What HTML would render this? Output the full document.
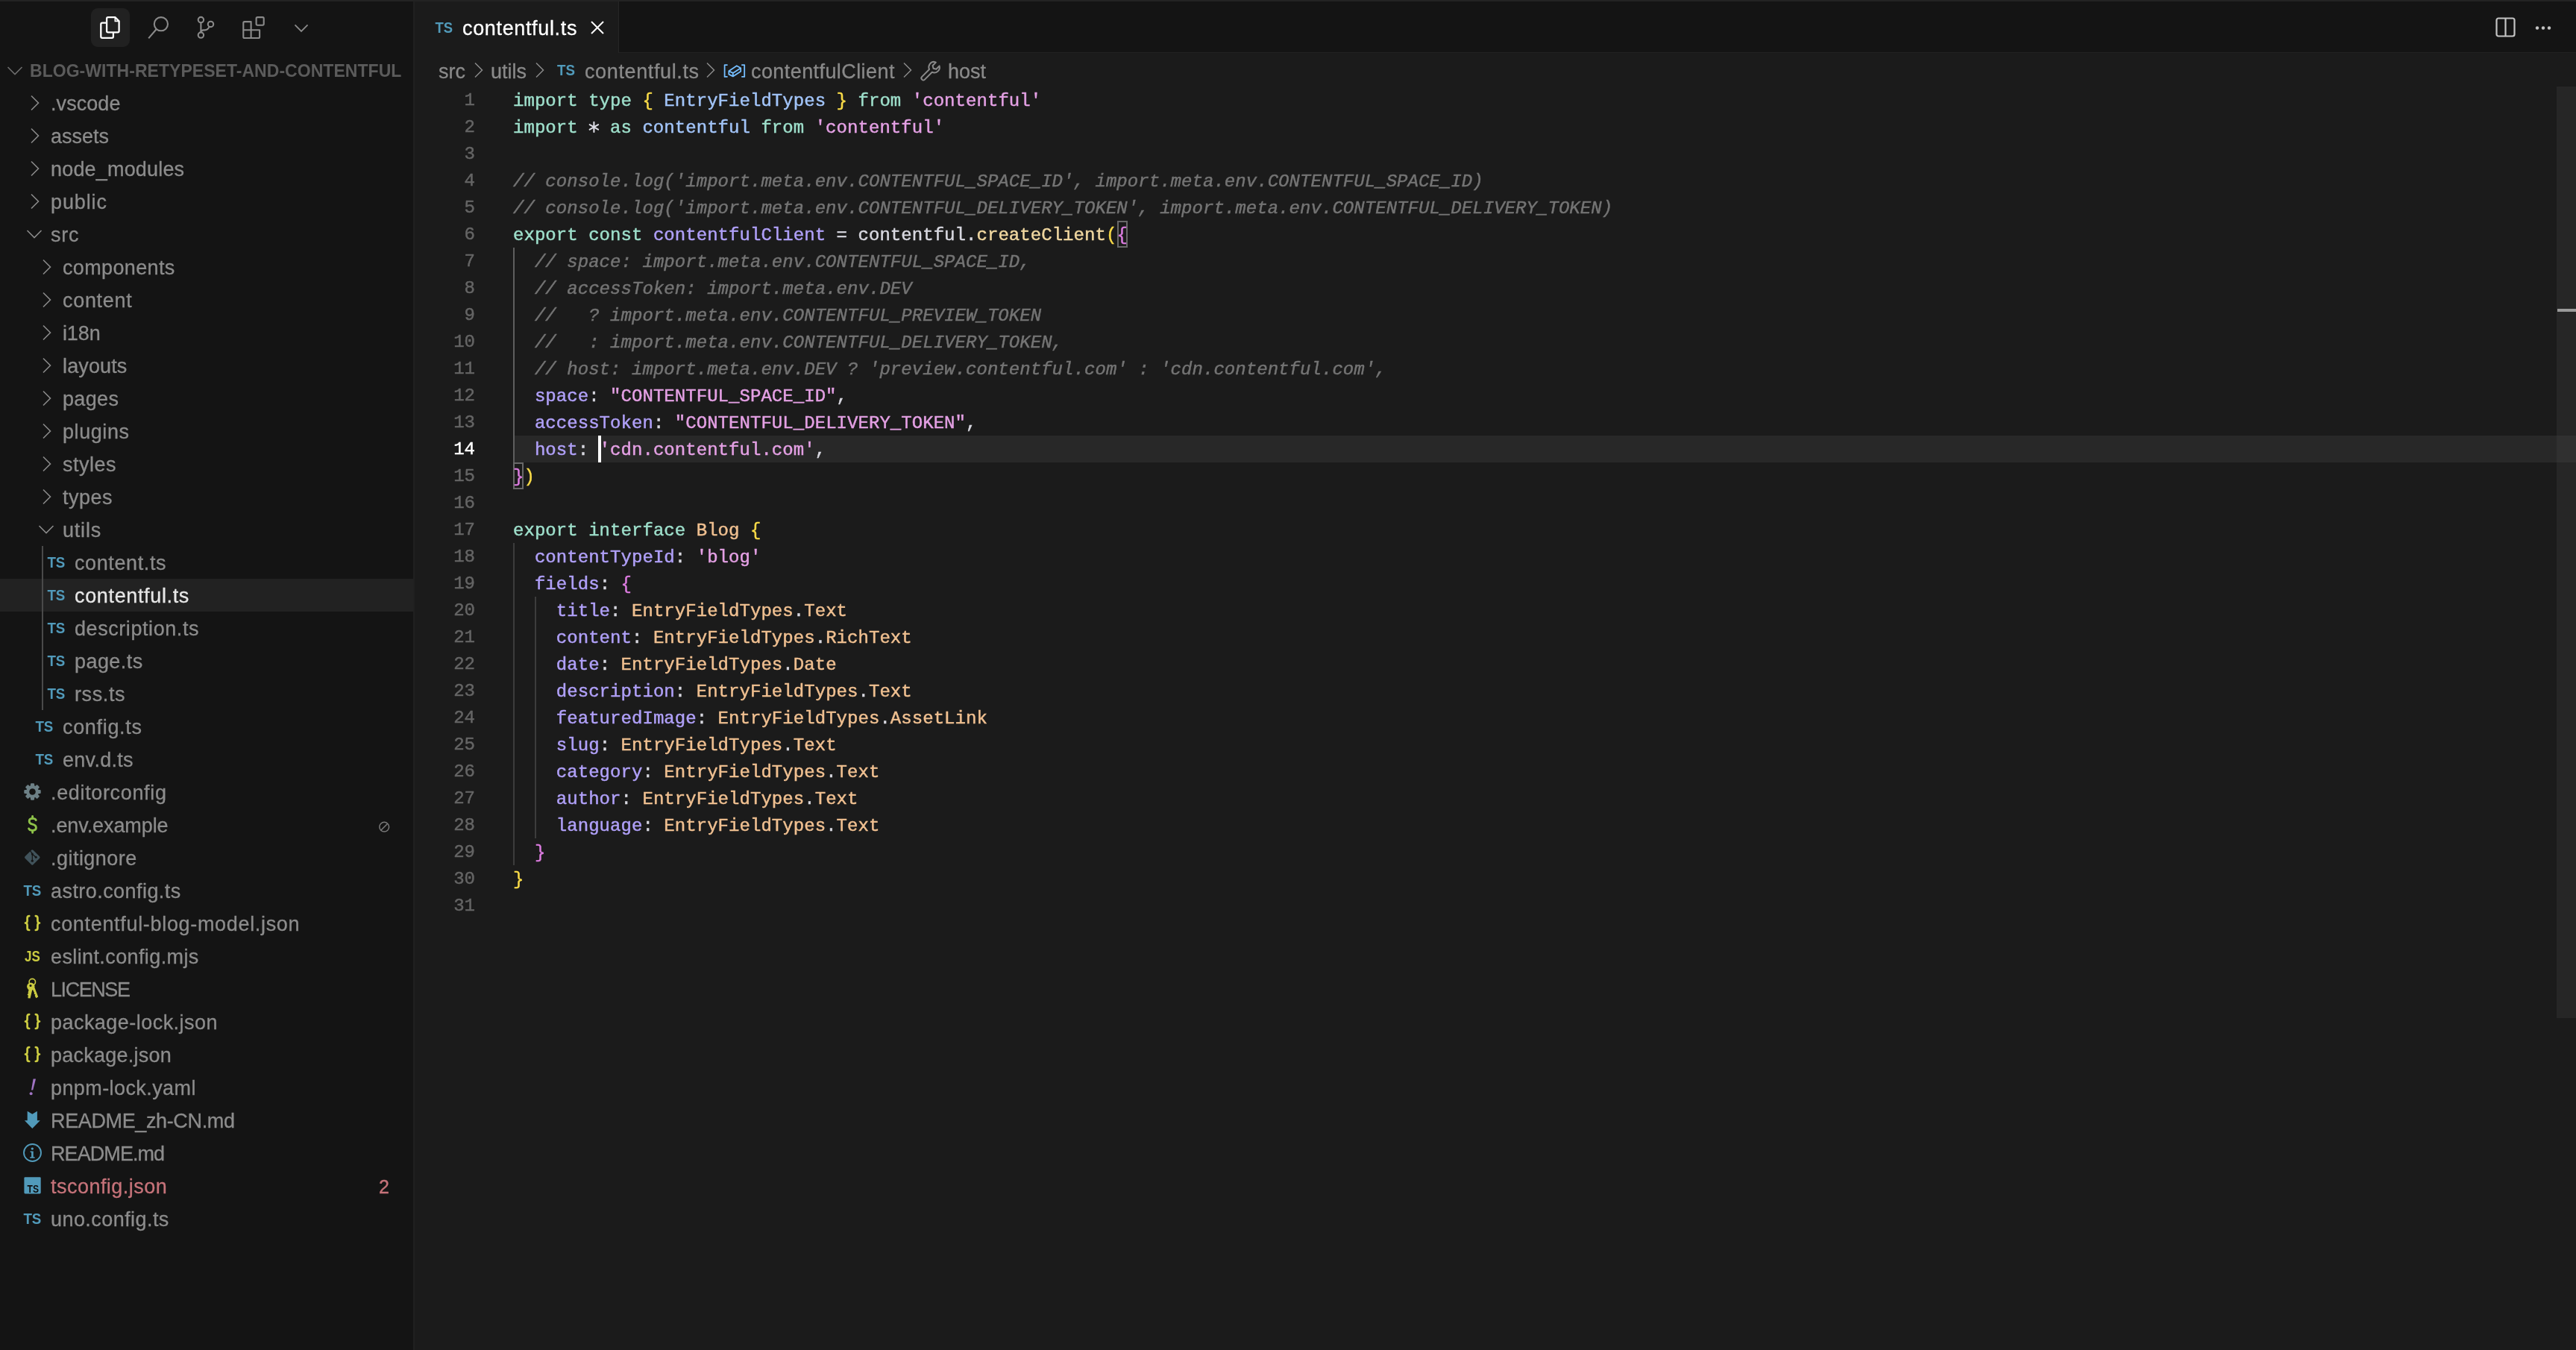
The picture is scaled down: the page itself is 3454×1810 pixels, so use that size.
<!DOCTYPE html>
<html><head><meta charset="utf-8">
<style>
*{margin:0;padding:0;box-sizing:border-box}
html,body{width:3454px;height:1810px;overflow:hidden;background:#1b1b1b}
body{position:relative;-webkit-font-smoothing:antialiased;font-family:"Liberation Sans",sans-serif}
.topline{position:absolute;left:0;top:0;width:3454px;height:2px;background:#232323}
#side{position:absolute;left:0;top:2px;width:554px;height:1808px;background:#141414}
#side .inner{position:absolute;left:0;top:-2px;width:554px;height:1810px}
#sideborder{position:absolute;left:554px;top:2px;width:2px;height:1808px;background:#202020}
.act-bg{position:absolute;left:122px;top:11px;width:52px;height:52px;border-radius:9px;background:#212121}
.aicon{position:absolute}
.hdr{will-change:transform;position:absolute;left:40px;top:73px;letter-spacing:0.04px;height:44px;line-height:44px;font-size:23px;font-weight:bold;color:#5b5b5b;white-space:nowrap}
.hdrchev{position:absolute;left:9px;top:88px}
.row{position:absolute;left:0;width:554px;height:44px}
.row.sel{background:#222222}
.nm{-webkit-text-stroke:0.3px currentColor;position:absolute;top:1px;height:44px;line-height:44px;font-size:27px;color:#8c8c8c;white-space:nowrap;will-change:transform}
.row.sel .nm{color:#e6e6e6}
.row.err .nm{color:#c6737a}
.chr{position:absolute;top:11px}
.chd{position:absolute;top:15px}
.chev{display:block}
.fi{position:absolute;top:0;height:44px;width:30px;will-change:transform}
.fi .ic{position:absolute;top:0;left:0}
.ic-ts,.ic-js{position:absolute;top:0;left:0;line-height:44px;font-size:19px;font-weight:bold;color:#519aba;letter-spacing:-0.5px}
.ic-js{color:#cbcb41}
.ic-json{position:absolute;top:0;left:1px;line-height:44px;font-size:21px;font-weight:bold;color:#cbcb41;letter-spacing:-1px}
.ic-yaml{position:absolute;top:0;left:7px;line-height:44px;font-size:24px;font-weight:bold;font-style:italic;color:#a074c4}
.ic-env{position:absolute;top:0;left:4px;line-height:44px;font-size:24px;font-weight:bold;color:#8dc149}
.ign{position:absolute;left:500px;top:0}
.badge{-webkit-text-stroke:0.4px currentColor;will-change:transform;position:absolute;left:507.5px;top:0.5px;line-height:44px;font-size:25px;color:#c6737a}
.guide-side{position:absolute;left:56px;top:732px;width:2px;height:220px;background:#4a4a4a}
/* tabs */
#tabbar{position:absolute;left:556px;top:2px;width:2898px;height:69px;background:#141414}
#tabbar .bottom{position:absolute;left:0;top:68px;width:2898px;height:1px;background:#222}
.tab{position:absolute;left:556px;top:2px;width:273px;height:69px;background:#1b1b1b}
.tabsep{position:absolute;left:829px;top:2px;width:1px;height:69px;background:#262626}
.tabts{position:absolute;left:583px;top:3px;line-height:69px;font-size:20px;font-weight:bold;color:#519aba;letter-spacing:-0.5px}
.tabname{-webkit-text-stroke:0.3px currentColor;will-change:transform;position:absolute;left:620px;top:4px;line-height:69px;font-size:27px;letter-spacing:0.65px;color:#ffffff}
.tabclose{position:absolute;left:791px;top:28px}
.split{position:absolute;left:3346px;top:23px}
.more{position:absolute;left:3398px;top:33px}
/* breadcrumbs */
.bc{-webkit-text-stroke:0.3px currentColor;will-change:transform;position:absolute;top:73.5px;height:44px;line-height:44px;font-size:27px;color:#8a8a8a;white-space:nowrap}
.bcts{position:absolute;top:72px;line-height:44px;font-size:19px;font-weight:bold;color:#519aba;letter-spacing:-0.5px}
.bcchev{position:absolute;top:83px}
/* editor */
.curline{position:absolute;left:690px;top:584px;width:2738px;height:36px;background:#282828}
.ln{-webkit-text-stroke:0.45px currentColor;will-change:transform;position:absolute;left:560px;width:77px;text-align:right;height:36px;line-height:36px;font-family:"Liberation Mono",monospace;font-size:24px;color:#656565;padding-top:1px}
.ln.act{color:#ffffff}
.cl{position:absolute;left:688px;-webkit-text-stroke:0.45px currentColor;will-change:transform;height:36px;line-height:36px;font-family:"Liberation Mono",monospace;font-size:24px;color:#e0e0e0;white-space:pre;letter-spacing:0.05px;padding-top:2px}
.kw{color:#9edfcb}
.ty{color:#a2c4f8}
.b1{color:#f8da48}
.b2{color:#dc7ce0}
.str{color:#e4a0e4}
.cm{color:#747474;font-style:italic}
.wh{color:#d8d8e0}
.ast{display:inline-block;vertical-align:top}
.pr{color:#b0a0f8}
.vr{color:#b0a0f8}
.fn{color:#f0d7a0}
.tn{color:#f0c091}
.guide{position:absolute;width:2px;background:#3c3c3c}
.guide.active{background:#5e5e5e}
.brbox{position:absolute;border:2px solid #686868;width:14px;height:36px}
.cursor{position:absolute;left:802px;top:584px;width:4px;height:36px;background:#ffffff}
.scroll{position:absolute;left:3428px;top:116px;width:26px;height:1249px;background:#262626}
.scrollmark{position:absolute;left:3429px;top:414px;width:25px;height:4px;background:#9a9a9a}
.scrollcur{position:absolute;left:3428px;top:584px;width:26px;height:36px;background:#303030}
</style></head>
<body>
<div class="topline"></div>
<div id="side"><div class="inner">
  <div class="act-bg"></div>
  <svg class="aicon" style="left:0;top:0" width="554" height="70" viewBox="0 0 554 70">
    <g fill="none" stroke="#ffffff" stroke-width="2.3" stroke-linejoin="round">
      <path d="M144.9 23.1H154.3L159.6 28.4V41.6Q159.6 43.4 157.8 43.4H144.9Q143.1 43.4 143.1 41.6V24.9Q143.1 23.1 144.9 23.1Z"/>
      <path d="M143.1 30.6H137.1Q135.3 30.6 135.3 32.4V49.1Q135.3 50.9 137.1 50.9H150.1Q151.9 50.9 151.9 49.1V43.4"/>
    </g>
    <path d="M154.3 23.8V28.4H159" fill="none" stroke="#ffffff" stroke-width="1.6"/>
    <g fill="none" stroke="#8a8a8a" stroke-width="2.1">
      <circle cx="215.9" cy="32.2" r="9.1"/>
      <path d="M209.6 39.3L199.2 51.4"/>
      <circle cx="269.4" cy="26.6" r="3.7"/>
      <circle cx="269.4" cy="47.1" r="3.7"/>
      <circle cx="282.5" cy="32.4" r="3.7"/>
      <path d="M269.4 30.3V43.4"/>
      <path d="M280.7 35.7Q278.8 40.4 274.6 40.4H273Q269.4 40.4 269.4 43.4"/>
    </g>
    <g fill="none" stroke="#8a8a8a" stroke-width="2.1" stroke-linejoin="round">
      <path d="M327.9 29.1H336.6V40.2H348.1V49.4Q348.1 51 346.5 51H327.9Q326.3 51 326.3 49.4V30.7Q326.3 29.1 327.9 29.1Z"/>
      <path d="M326.3 40.2H336.6V51"/>
      <rect x="343.6" y="23.1" width="10.1" height="10.6" rx="1.6"/>
    </g>
    <path d="M395.5 33.4L404 41.9L412.5 33.4" fill="none" stroke="#8a8a8a" stroke-width="1.8"/>
  </svg>

  <svg class="hdrchev" width="22" height="14" viewBox="0 0 22 14"><path d="M1.5 2l9.5 9.5L20.5 2" fill="none" stroke="#6e6e6e" stroke-width="1.6"/></svg>
  <div class="hdr">BLOG-WITH-RETYPESET-AND-CONTENTFUL</div>
<div class="row" style="top:116px"><div class="chr" style="left:40px"><svg class="chev" width="14" height="22" viewBox="0 0 14 22"><path d="M2 1.5l9.5 9.5L2 20.5" fill="none" stroke="#8a8a8a" stroke-width="1.6"/></svg></div><div class="nm" style="left:67.5px;letter-spacing:0.063px">.vscode</div></div>
<div class="row" style="top:160px"><div class="chr" style="left:40px"><svg class="chev" width="14" height="22" viewBox="0 0 14 22"><path d="M2 1.5l9.5 9.5L2 20.5" fill="none" stroke="#8a8a8a" stroke-width="1.6"/></svg></div><div class="nm" style="left:67.5px;letter-spacing:0.0px">assets</div></div>
<div class="row" style="top:204px"><div class="chr" style="left:40px"><svg class="chev" width="14" height="22" viewBox="0 0 14 22"><path d="M2 1.5l9.5 9.5L2 20.5" fill="none" stroke="#8a8a8a" stroke-width="1.6"/></svg></div><div class="nm" style="left:67.5px;letter-spacing:0.177px">node_modules</div></div>
<div class="row" style="top:248px"><div class="chr" style="left:40px"><svg class="chev" width="14" height="22" viewBox="0 0 14 22"><path d="M2 1.5l9.5 9.5L2 20.5" fill="none" stroke="#8a8a8a" stroke-width="1.6"/></svg></div><div class="nm" style="left:67.5px;letter-spacing:0.88px">public</div></div>
<div class="row" style="top:292px"><div class="chd" style="left:35px"><svg class="chev" width="22" height="14" viewBox="0 0 22 14"><path d="M1.5 2l9.5 9.5L20.5 2" fill="none" stroke="#8a8a8a" stroke-width="1.6"/></svg></div><div class="nm" style="left:67.5px;letter-spacing:0.8px">src</div></div>
<div class="row" style="top:336px"><div class="chr" style="left:56px"><svg class="chev" width="14" height="22" viewBox="0 0 14 22"><path d="M2 1.5l9.5 9.5L2 20.5" fill="none" stroke="#8a8a8a" stroke-width="1.6"/></svg></div><div class="nm" style="left:83.5px;letter-spacing:0.358px">components</div></div>
<div class="row" style="top:380px"><div class="chr" style="left:56px"><svg class="chev" width="14" height="22" viewBox="0 0 14 22"><path d="M2 1.5l9.5 9.5L2 20.5" fill="none" stroke="#8a8a8a" stroke-width="1.6"/></svg></div><div class="nm" style="left:83.5px;letter-spacing:0.697px">content</div></div>
<div class="row" style="top:424px"><div class="chr" style="left:56px"><svg class="chev" width="14" height="22" viewBox="0 0 14 22"><path d="M2 1.5l9.5 9.5L2 20.5" fill="none" stroke="#8a8a8a" stroke-width="1.6"/></svg></div><div class="nm" style="left:83.5px;letter-spacing:-0.13px">i18n</div></div>
<div class="row" style="top:468px"><div class="chr" style="left:56px"><svg class="chev" width="14" height="22" viewBox="0 0 14 22"><path d="M2 1.5l9.5 9.5L2 20.5" fill="none" stroke="#8a8a8a" stroke-width="1.6"/></svg></div><div class="nm" style="left:83.5px;letter-spacing:0.133px">layouts</div></div>
<div class="row" style="top:512px"><div class="chr" style="left:56px"><svg class="chev" width="14" height="22" viewBox="0 0 14 22"><path d="M2 1.5l9.5 9.5L2 20.5" fill="none" stroke="#8a8a8a" stroke-width="1.6"/></svg></div><div class="nm" style="left:83.5px;letter-spacing:0.355px">pages</div></div>
<div class="row" style="top:556px"><div class="chr" style="left:56px"><svg class="chev" width="14" height="22" viewBox="0 0 14 22"><path d="M2 1.5l9.5 9.5L2 20.5" fill="none" stroke="#8a8a8a" stroke-width="1.6"/></svg></div><div class="nm" style="left:83.5px;letter-spacing:0.567px">plugins</div></div>
<div class="row" style="top:600px"><div class="chr" style="left:56px"><svg class="chev" width="14" height="22" viewBox="0 0 14 22"><path d="M2 1.5l9.5 9.5L2 20.5" fill="none" stroke="#8a8a8a" stroke-width="1.6"/></svg></div><div class="nm" style="left:83.5px;letter-spacing:0.48px">styles</div></div>
<div class="row" style="top:644px"><div class="chr" style="left:56px"><svg class="chev" width="14" height="22" viewBox="0 0 14 22"><path d="M2 1.5l9.5 9.5L2 20.5" fill="none" stroke="#8a8a8a" stroke-width="1.6"/></svg></div><div class="nm" style="left:83.5px;letter-spacing:0.495px">types</div></div>
<div class="row" style="top:688px"><div class="chd" style="left:51px"><svg class="chev" width="22" height="14" viewBox="0 0 22 14"><path d="M1.5 2l9.5 9.5L20.5 2" fill="none" stroke="#8a8a8a" stroke-width="1.6"/></svg></div><div class="nm" style="left:83.5px;letter-spacing:0.8px">utils</div></div>
<div class="row" style="top:732px"><div class="fi" style="left:61px"><svg class="ic" width="30" height="44" viewBox="0 0 30 44"><text x="2.4" y="29.1" font-family="Liberation Sans" font-weight="bold" font-size="21" textLength="24" lengthAdjust="spacingAndGlyphs" fill="#519aba">TS</text></svg></div><div class="nm" style="left:99.5px;letter-spacing:0.604px">content.ts</div></div>
<div class="row sel" style="top:776px"><div class="fi" style="left:61px"><svg class="ic" width="30" height="44" viewBox="0 0 30 44"><text x="2.4" y="29.1" font-family="Liberation Sans" font-weight="bold" font-size="21" textLength="24" lengthAdjust="spacingAndGlyphs" fill="#519aba">TS</text></svg></div><div class="nm" style="left:99.5px;letter-spacing:0.648px">contentful.ts</div></div>
<div class="row" style="top:820px"><div class="fi" style="left:61px"><svg class="ic" width="30" height="44" viewBox="0 0 30 44"><text x="2.4" y="29.1" font-family="Liberation Sans" font-weight="bold" font-size="21" textLength="24" lengthAdjust="spacingAndGlyphs" fill="#519aba">TS</text></svg></div><div class="nm" style="left:99.5px;letter-spacing:0.569px">description.ts</div></div>
<div class="row" style="top:864px"><div class="fi" style="left:61px"><svg class="ic" width="30" height="44" viewBox="0 0 30 44"><text x="2.4" y="29.1" font-family="Liberation Sans" font-weight="bold" font-size="21" textLength="24" lengthAdjust="spacingAndGlyphs" fill="#519aba">TS</text></svg></div><div class="nm" style="left:99.5px;letter-spacing:0.43px">page.ts</div></div>
<div class="row" style="top:908px"><div class="fi" style="left:61px"><svg class="ic" width="30" height="44" viewBox="0 0 30 44"><text x="2.4" y="29.1" font-family="Liberation Sans" font-weight="bold" font-size="21" textLength="24" lengthAdjust="spacingAndGlyphs" fill="#519aba">TS</text></svg></div><div class="nm" style="left:99.5px;letter-spacing:0.6px">rss.ts</div></div>
<div class="row" style="top:952px"><div class="fi" style="left:45px"><svg class="ic" width="30" height="44" viewBox="0 0 30 44"><text x="2.4" y="29.1" font-family="Liberation Sans" font-weight="bold" font-size="21" textLength="24" lengthAdjust="spacingAndGlyphs" fill="#519aba">TS</text></svg></div><div class="nm" style="left:83.5px;letter-spacing:0.678px">config.ts</div></div>
<div class="row" style="top:996px"><div class="fi" style="left:45px"><svg class="ic" width="30" height="44" viewBox="0 0 30 44"><text x="2.4" y="29.1" font-family="Liberation Sans" font-weight="bold" font-size="21" textLength="24" lengthAdjust="spacingAndGlyphs" fill="#519aba">TS</text></svg></div><div class="nm" style="left:83.5px;letter-spacing:0.287px">env.d.ts</div></div>
<div class="row" style="top:1040px"><div class="fi" style="left:29px"><svg class="ic" width="30" height="44" viewBox="0 0 30 44"><g transform="translate(14.5 21.5)" fill="#6d8086"><circle r="8.4"/><rect x="-2.6" y="-11.2" width="5.2" height="5" rx="1.1" transform="rotate(0)"/><rect x="-2.6" y="-11.2" width="5.2" height="5" rx="1.1" transform="rotate(45)"/><rect x="-2.6" y="-11.2" width="5.2" height="5" rx="1.1" transform="rotate(90)"/><rect x="-2.6" y="-11.2" width="5.2" height="5" rx="1.1" transform="rotate(135)"/><rect x="-2.6" y="-11.2" width="5.2" height="5" rx="1.1" transform="rotate(180)"/><rect x="-2.6" y="-11.2" width="5.2" height="5" rx="1.1" transform="rotate(225)"/><rect x="-2.6" y="-11.2" width="5.2" height="5" rx="1.1" transform="rotate(270)"/><rect x="-2.6" y="-11.2" width="5.2" height="5" rx="1.1" transform="rotate(315)"/></g><circle cx="14.5" cy="21.5" r="4.3" fill="#141414"/></svg></div><div class="nm" style="left:67.5px;letter-spacing:0.653px">.editorconfig</div></div>
<div class="row" style="top:1084px"><div class="fi" style="left:29px"><svg class="ic" width="30" height="44" viewBox="0 0 30 44"><g fill="none" stroke="#8dc149" stroke-width="2.9" stroke-linecap="round"><path d="M19.2 15.6Q18.4 13.4 14.6 13.4Q10.2 13.4 10.2 17Q10.2 20 14.6 21.2Q19.4 22.5 19.4 25.8Q19.4 29.4 14.6 29.4Q10.4 29.4 9.6 26.9"/><path d="M14.6 10.4V13.2M14.6 29.6V32.4"/></g></svg></div><div class="nm" style="left:67.5px;letter-spacing:-0.092px">.env.example</div><svg class="ign" width="30" height="44" viewBox="500 0 30 44"><circle cx="515.2" cy="24.7" r="6.4" fill="none" stroke="#7a7a7a" stroke-width="1.5"/><path d="M510.7 29.2L519.7 20.2" stroke="#7a7a7a" stroke-width="1.5"/></svg></div>
<div class="row" style="top:1128px"><div class="fi" style="left:29px"><svg class="ic" width="30" height="44" viewBox="0 0 30 44"><rect x="6.6" y="13.8" width="15.4" height="15.4" rx="1.6" transform="rotate(45 14.3 21.5)" fill="#41535b"/><g stroke="#141414" stroke-width="1.2" fill="none"><path d="M10.8 11.6L14.3 16.6V26M14.3 17.2L19.2 21.2"/></g><g fill="#141414"><circle cx="14.3" cy="16.9" r="1.5"/><circle cx="19.2" cy="21.3" r="1.5"/><circle cx="14.3" cy="26.2" r="1.6"/></g></svg></div><div class="nm" style="left:67.5px;letter-spacing:0.469px">.gitignore</div></div>
<div class="row" style="top:1172px"><div class="fi" style="left:29px"><svg class="ic" width="30" height="44" viewBox="0 0 30 44"><text x="2.4" y="29.1" font-family="Liberation Sans" font-weight="bold" font-size="21" textLength="24" lengthAdjust="spacingAndGlyphs" fill="#519aba">TS</text></svg></div><div class="nm" style="left:67.5px;letter-spacing:0.44px">astro.config.ts</div></div>
<div class="row" style="top:1216px"><div class="fi" style="left:29px"><svg class="ic" width="30" height="44" viewBox="0 0 30 44"><g fill="none" stroke="#cbcb41" stroke-width="2.7" stroke-linecap="round" stroke-linejoin="round"><path d="M10.2 12.1Q7.6 12.1 7.6 14.6V18.6Q7.6 21.5 5 21.5Q7.6 21.5 7.6 24.4V28.5Q7.6 31 10.2 31"/><path d="M18.8 12.1Q21.4 12.1 21.4 14.6V18.6Q21.4 21.5 24 21.5Q21.4 21.5 21.4 24.4V28.5Q21.4 31 18.8 31"/></g></svg></div><div class="nm" style="left:67.5px;letter-spacing:0.676px">contentful-blog-model.json</div></div>
<div class="row" style="top:1260px"><div class="fi" style="left:29px"><svg class="ic" width="30" height="44" viewBox="0 0 30 44"><text x="4.1" y="29.1" font-family="Liberation Sans" font-weight="bold" font-size="21" textLength="20.8" lengthAdjust="spacingAndGlyphs" fill="#cbcb41">JS</text></svg></div><div class="nm" style="left:67.5px;letter-spacing:0.39px">eslint.config.mjs</div></div>
<div class="row" style="top:1304px"><div class="fi" style="left:29px"><svg class="ic" width="30" height="44" viewBox="0 0 30 44"><circle cx="14.3" cy="12.6" r="4.2" fill="none" stroke="#cbcb41" stroke-width="1.6"/><g fill="#cbcb41"><circle cx="12.3" cy="18.6" r="5.2"/><path d="M10.2 21L14.6 21.6L11.6 34.6L8.4 34.2L8.8 30.6L7.6 29.8L9 27.6L8.6 26.4Z"/><path d="M13.8 20.4L17.2 19.4L22.2 32.6L19.4 34.2L17.6 31L18.4 29.6L16.6 28.8L17 27.2Z"/></g><circle cx="12" cy="17.6" r="1.5" fill="#141414"/></svg></div><div class="nm" style="left:67.5px;letter-spacing:-1.437px">LICENSE</div></div>
<div class="row" style="top:1348px"><div class="fi" style="left:29px"><svg class="ic" width="30" height="44" viewBox="0 0 30 44"><g fill="none" stroke="#cbcb41" stroke-width="2.7" stroke-linecap="round" stroke-linejoin="round"><path d="M10.2 12.1Q7.6 12.1 7.6 14.6V18.6Q7.6 21.5 5 21.5Q7.6 21.5 7.6 24.4V28.5Q7.6 31 10.2 31"/><path d="M18.8 12.1Q21.4 12.1 21.4 14.6V18.6Q21.4 21.5 24 21.5Q21.4 21.5 21.4 24.4V28.5Q21.4 31 18.8 31"/></g></svg></div><div class="nm" style="left:67.5px;letter-spacing:0.46px">package-lock.json</div></div>
<div class="row" style="top:1392px"><div class="fi" style="left:29px"><svg class="ic" width="30" height="44" viewBox="0 0 30 44"><g fill="none" stroke="#cbcb41" stroke-width="2.7" stroke-linecap="round" stroke-linejoin="round"><path d="M10.2 12.1Q7.6 12.1 7.6 14.6V18.6Q7.6 21.5 5 21.5Q7.6 21.5 7.6 24.4V28.5Q7.6 31 10.2 31"/><path d="M18.8 12.1Q21.4 12.1 21.4 14.6V18.6Q21.4 21.5 24 21.5Q21.4 21.5 21.4 24.4V28.5Q21.4 31 18.8 31"/></g></svg></div><div class="nm" style="left:67.5px;letter-spacing:0.24px">package.json</div></div>
<div class="row" style="top:1436px"><div class="fi" style="left:29px"><svg class="ic" width="30" height="44" viewBox="0 0 30 44"><path d="M15.6 10.6L19 10.6L15.2 25.4L13 25.4Z" fill="#a074c4"/><circle cx="12.6" cy="30.3" r="2" fill="#a074c4"/></svg></div><div class="nm" style="left:67.5px;letter-spacing:0.416px">pnpm-lock.yaml</div></div>
<div class="row" style="top:1480px"><div class="fi" style="left:29px"><svg class="ic" width="30" height="44" viewBox="0 0 30 44"><path d="M7.7 9.8L14.3 13.8L20.9 9.8V22.2H24.8L14.3 32.9L3.9 22.2H7.7Z" fill="#519aba"/></svg></div><div class="nm" style="left:67.5px;letter-spacing:-0.367px">README_zh-CN.md</div></div>
<div class="row" style="top:1524px"><div class="fi" style="left:29px"><svg class="ic" width="30" height="44" viewBox="0 0 30 44"><circle cx="14.5" cy="21.5" r="11.5" fill="none" stroke="#519aba" stroke-width="1.9"/><g fill="#519aba"><circle cx="14.3" cy="16.1" r="1.7"/><path d="M11.6 19.5H15.7V27.2H17.6V28.7H11.2V27.2H13.1V21H11.6Z"/></g></svg></div><div class="nm" style="left:67.5px;letter-spacing:-0.925px">README.md</div></div>
<div class="row err" style="top:1568px"><div class="fi" style="left:29px"><svg class="ic" width="30" height="44" viewBox="0 0 30 44"><rect x="3.4" y="10.2" width="22.3" height="22.3" rx="1.4" fill="#519aba"/><text x="7.6" y="30.7" font-family="Liberation Sans" font-weight="bold" font-size="14.5" textLength="15.4" lengthAdjust="spacingAndGlyphs" fill="#0d0d0d">TS</text></svg></div><div class="nm" style="left:67.5px;letter-spacing:0.47px">tsconfig.json</div><div class="badge">2</div></div>
<div class="row" style="top:1612px"><div class="fi" style="left:29px"><svg class="ic" width="30" height="44" viewBox="0 0 30 44"><text x="2.4" y="29.1" font-family="Liberation Sans" font-weight="bold" font-size="21" textLength="24" lengthAdjust="spacingAndGlyphs" fill="#519aba">TS</text></svg></div><div class="nm" style="left:67.5px;letter-spacing:0.437px">uno.config.ts</div></div>
  <div class="guide-side"></div>
</div></div>
<div id="sideborder"></div>

<div id="tabbar"><div class="bottom"></div></div>
<div class="tab"></div>
<div class="tabsep"></div>
<svg style="position:absolute;left:580px;top:20px;will-change:transform" width="32" height="32" viewBox="0 0 32 32"><text x="3.4" y="24" font-family="Liberation Sans" font-weight="bold" font-size="20.5" textLength="23.6" lengthAdjust="spacingAndGlyphs" fill="#519aba">TS</text></svg>
<div class="tabname">contentful.ts</div>
<svg class="tabclose" style="top:27.3px" width="20" height="20" viewBox="0 0 20 20"><path d="M2 2l16 16M18 2L2 18" stroke="#ffffff" stroke-width="2"/></svg>
<svg class="split" width="28" height="28" viewBox="0 0 28 28"><g fill="none" stroke="#c4c4c4" stroke-width="2.2"><rect x="1.5" y="1.5" width="24" height="24" rx="2.5"/><path d="M13.5 1.5v24"/></g></svg>
<svg class="more" width="26" height="10" viewBox="0 0 26 10"><g fill="#c4c4c4"><circle cx="4" cy="4.5" r="2.2"/><circle cx="12" cy="4.5" r="2.2"/><circle cx="20" cy="4.5" r="2.2"/></g></svg>

<div class="bc" style="left:588px">src</div>
<svg class="bcchev" style="left:635px" width="14" height="22" viewBox="0 0 14 22"><path d="M2 1.5l9.5 9.5L2 20.5" fill="none" stroke="#8a8a8a" stroke-width="1.5"/></svg>
<div class="bc" style="left:658px">utils</div>
<svg class="bcchev" style="left:717px" width="14" height="22" viewBox="0 0 14 22"><path d="M2 1.5l9.5 9.5L2 20.5" fill="none" stroke="#8a8a8a" stroke-width="1.5"/></svg>
<svg style="position:absolute;left:744px;top:78px;will-change:transform" width="32" height="32" viewBox="0 0 32 32"><text x="3" y="23.2" font-family="Liberation Sans" font-weight="bold" font-size="21" textLength="24" lengthAdjust="spacingAndGlyphs" fill="#519aba">TS</text></svg>
<div class="bc" style="left:783.5px;letter-spacing:0.62px">contentful.ts</div>
<svg class="bcchev" style="left:946px" width="14" height="22" viewBox="0 0 14 22"><path d="M2 1.5l9.5 9.5L2 20.5" fill="none" stroke="#8a8a8a" stroke-width="1.5"/></svg>
<svg class="bcchev" style="left:969px;top:82px" width="32" height="26" viewBox="969 82 32 26"><g fill="none" stroke="#75beff" stroke-width="1.8" stroke-linejoin="round"><path d="M975.6 87.2H971.6V102.9H975.6M994.2 87.2H998.2V102.9H994.2"/><path d="M977.3 95.2L987.8 88.2L993.2 91.2V95.8L982.8 102.4L977.3 99.6Z M977.3 95.2L982.8 97.9L993.2 91.2 M982.8 97.9V102.4"/></g></svg>
<div class="bc" style="left:1007px;letter-spacing:0.42px">contentfulClient</div>
<svg class="bcchev" style="left:1210px" width="14" height="22" viewBox="0 0 14 22"><path d="M2 1.5l9.5 9.5L2 20.5" fill="none" stroke="#8a8a8a" stroke-width="1.5"/></svg>
<svg class="bcchev" style="left:1232px;top:79px" width="32" height="32" viewBox="0 0 29 29"><path d="M18.5 3.5a6.5 6.5 0 0 0-5.8 9.2L3.8 21.6a2.4 2.4 0 0 0 3.4 3.4l8.9-8.9a6.5 6.5 0 0 0 8.9-7.6l-3.9 3.9-3.4-.9-.9-3.4 3.9-3.9a6.5 6.5 0 0 0-2.2-.7z" fill="none" stroke="#8a8a8a" stroke-width="1.8" stroke-linejoin="round"/></svg>
<div class="bc" style="left:1271px">host</div>

<div class="curline"></div>
<div class="guide active" style="left:688px;top:332px;height:288px"></div>
<div class="guide" style="left:688px;top:728px;height:432px"></div>
<div class="guide" style="left:717px;top:800px;height:324px"></div>
<div class="brbox" style="left:1498px;top:296px"></div>
<div class="brbox" style="left:688px;top:620px"></div>
<div class="ln" style="top:116px">1</div>
<div class="ln" style="top:152px">2</div>
<div class="ln" style="top:188px">3</div>
<div class="ln" style="top:224px">4</div>
<div class="ln" style="top:260px">5</div>
<div class="ln" style="top:296px">6</div>
<div class="ln" style="top:332px">7</div>
<div class="ln" style="top:368px">8</div>
<div class="ln" style="top:404px">9</div>
<div class="ln" style="top:440px">10</div>
<div class="ln" style="top:476px">11</div>
<div class="ln" style="top:512px">12</div>
<div class="ln" style="top:548px">13</div>
<div class="ln act" style="top:584px">14</div>
<div class="ln" style="top:620px">15</div>
<div class="ln" style="top:656px">16</div>
<div class="ln" style="top:692px">17</div>
<div class="ln" style="top:728px">18</div>
<div class="ln" style="top:764px">19</div>
<div class="ln" style="top:800px">20</div>
<div class="ln" style="top:836px">21</div>
<div class="ln" style="top:872px">22</div>
<div class="ln" style="top:908px">23</div>
<div class="ln" style="top:944px">24</div>
<div class="ln" style="top:980px">25</div>
<div class="ln" style="top:1016px">26</div>
<div class="ln" style="top:1052px">27</div>
<div class="ln" style="top:1088px">28</div>
<div class="ln" style="top:1124px">29</div>
<div class="ln" style="top:1160px">30</div>
<div class="ln" style="top:1196px">31</div>
<div class="cl" style="top:116px"><span class="kw">import</span> <span class="kw">type</span> <span class="b1">{</span> <span class="ty">EntryFieldTypes</span> <span class="b1">}</span> <span class="kw">from</span> <span class="str">&#x27;contentful&#x27;</span></div>
<div class="cl" style="top:152px"><span class="kw">import</span> <svg class="ast" width="14.45" height="36" viewBox="0 0 14.45 36"><g stroke="#dcdce4" stroke-width="2.1" stroke-linecap="round"><path d="M7.4 9.8V23M1.7 13.1L13.1 19.7M1.7 19.7L13.1 13.1"/></g></svg> <span class="kw">as</span> <span class="ty">contentful</span> <span class="kw">from</span> <span class="str">&#x27;contentful&#x27;</span></div>
<div class="cl" style="top:188px"></div>
<div class="cl" style="top:224px"><span class="cm">// console.log(&#x27;import.meta.env.CONTENTFUL_SPACE_ID&#x27;, import.meta.env.CONTENTFUL_SPACE_ID)</span></div>
<div class="cl" style="top:260px"><span class="cm">// console.log(&#x27;import.meta.env.CONTENTFUL_DELIVERY_TOKEN&#x27;, import.meta.env.CONTENTFUL_DELIVERY_TOKEN)</span></div>
<div class="cl" style="top:296px"><span class="kw">export</span> <span class="kw">const</span> <span class="vr">contentfulClient</span> <span class="wh">=</span> <span class="wh">contentful.</span><span class="fn">createClient</span><span class="b1">(</span><span class="b2">{</span></div>
<div class="cl" style="top:332px">  <span class="cm">// space: import.meta.env.CONTENTFUL_SPACE_ID,</span></div>
<div class="cl" style="top:368px">  <span class="cm">// accessToken: import.meta.env.DEV</span></div>
<div class="cl" style="top:404px">  <span class="cm">//   ? import.meta.env.CONTENTFUL_PREVIEW_TOKEN</span></div>
<div class="cl" style="top:440px">  <span class="cm">//   : import.meta.env.CONTENTFUL_DELIVERY_TOKEN,</span></div>
<div class="cl" style="top:476px">  <span class="cm">// host: import.meta.env.DEV ? &#x27;preview.contentful.com&#x27; : &#x27;cdn.contentful.com&#x27;,</span></div>
<div class="cl" style="top:512px">  <span class="pr">space</span><span class="wh">: </span><span class="str">&quot;CONTENTFUL_SPACE_ID&quot;</span><span class="wh">,</span></div>
<div class="cl" style="top:548px">  <span class="pr">accessToken</span><span class="wh">: </span><span class="str">&quot;CONTENTFUL_DELIVERY_TOKEN&quot;</span><span class="wh">,</span></div>
<div class="cl" style="top:584px">  <span class="pr">host</span><span class="wh">: </span><span class="str">&#x27;cdn.contentful.com&#x27;</span><span class="wh">,</span></div>
<div class="cl" style="top:620px"><span class="b2">}</span><span class="b1">)</span></div>
<div class="cl" style="top:656px"></div>
<div class="cl" style="top:692px"><span class="kw">export</span> <span class="kw">interface</span> <span class="tn">Blog</span> <span class="b1">{</span></div>
<div class="cl" style="top:728px">  <span class="pr">contentTypeId</span><span class="wh">: </span><span class="str">&#x27;blog&#x27;</span></div>
<div class="cl" style="top:764px">  <span class="pr">fields</span><span class="wh">: </span><span class="b2">{</span></div>
<div class="cl" style="top:800px">    <span class="pr">title</span><span class="wh">: </span><span class="tn">EntryFieldTypes</span><span class="wh">.</span><span class="tn">Text</span></div>
<div class="cl" style="top:836px">    <span class="pr">content</span><span class="wh">: </span><span class="tn">EntryFieldTypes</span><span class="wh">.</span><span class="tn">RichText</span></div>
<div class="cl" style="top:872px">    <span class="pr">date</span><span class="wh">: </span><span class="tn">EntryFieldTypes</span><span class="wh">.</span><span class="tn">Date</span></div>
<div class="cl" style="top:908px">    <span class="pr">description</span><span class="wh">: </span><span class="tn">EntryFieldTypes</span><span class="wh">.</span><span class="tn">Text</span></div>
<div class="cl" style="top:944px">    <span class="pr">featuredImage</span><span class="wh">: </span><span class="tn">EntryFieldTypes</span><span class="wh">.</span><span class="tn">AssetLink</span></div>
<div class="cl" style="top:980px">    <span class="pr">slug</span><span class="wh">: </span><span class="tn">EntryFieldTypes</span><span class="wh">.</span><span class="tn">Text</span></div>
<div class="cl" style="top:1016px">    <span class="pr">category</span><span class="wh">: </span><span class="tn">EntryFieldTypes</span><span class="wh">.</span><span class="tn">Text</span></div>
<div class="cl" style="top:1052px">    <span class="pr">author</span><span class="wh">: </span><span class="tn">EntryFieldTypes</span><span class="wh">.</span><span class="tn">Text</span></div>
<div class="cl" style="top:1088px">    <span class="pr">language</span><span class="wh">: </span><span class="tn">EntryFieldTypes</span><span class="wh">.</span><span class="tn">Text</span></div>
<div class="cl" style="top:1124px">  <span class="b2">}</span></div>
<div class="cl" style="top:1160px"><span class="b1">}</span></div>
<div class="cl" style="top:1196px"></div>
<div class="cursor"></div>
<div class="scroll"></div>
<div class="scrollcur"></div>
<div class="scrollmark"></div>
</body></html>
